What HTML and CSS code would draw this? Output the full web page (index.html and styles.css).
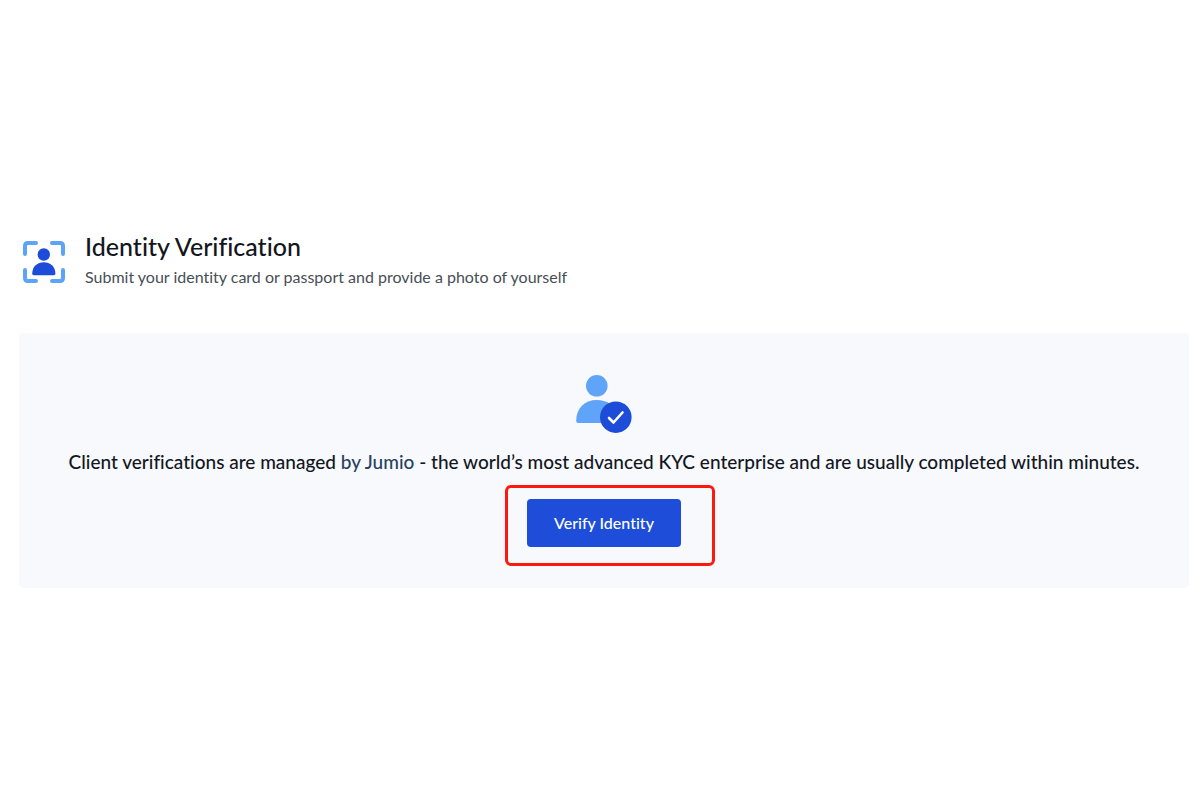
FILE: index.html
```html
<!DOCTYPE html>
<html lang="en">
<head>
<meta charset="utf-8">
<meta name="viewport" content="width=device-width, initial-scale=1">
<title>Identity Verification</title>
<link rel="stylesheet" href="styles.css">
</head>
<body>
<main class="page">
  <header class="intro">
    <svg class="intro-icon" viewBox="0 0 42 42" aria-hidden="true">
      <path class="line" d="M2 13V5Q2 2 5 2H13M29 2H37Q40 2 40 5V13M40 29V37Q40 40 37 40H29M13 40H5Q2 40 2 37V29"/>
      <circle class="dark" cx="20.8" cy="13.5" r="6.2"/>
      <path class="dark" d="M9.2 32.8C9.2 25.200 14.5 21.200 20.8 21.200S32.4 25.200 32.4 32.800Q32.4 34.200 31 34.200H10.6Q9.2 34.200 9.2 32.800Z"/>
    </svg>
    <div class="intro-text">
      <h1 class="title">Identity Verification</h1>
      <p class="subtitle">Submit your identity card or passport and provide a photo of yourself</p>
    </div>
  </header>
  <section class="panel">
    <svg class="panel-icon" viewBox="0 0 56 58" aria-hidden="true">
      <circle class="light" cx="20.8" cy="10.8" r="10.8"/>
      <path class="light" d="M.2 46C.2 33 8.500 25 20.800 25Q28 25 34 28.500V48H2.200Q.2 48 .2 46Z"/>
      <circle class="dark" cx="39.800" cy="42.200" r="15.800"/>
      <path class="tick" d="M33 43L37.500 47.500L46.500 37.500"/>
    </svg>
    <p class="message">Client verifications are managed <span class="partner">by Jumio</span> - the world’s most advanced KYC enterprise and are usually completed within minutes.</p>
    <div class="highlight">
      <button class="verify" type="button">Verify Identity</button>
    </div>
  </section>
</main>
</body>
</html>
```
FILE: styles.css
```css
* {
  box-sizing: border-box;
}

body {
  margin: 0;
  background: #fff;
  color: #13171d;
  font-family: Lato, "Liberation Sans", sans-serif;
  font-variant-ligatures: none;
}

.page {
  padding: 231px 11px 0 19px;
}

.intro {
  display: flex;
  align-items: flex-end;
  gap: 20px;
  padding-left: 4px;
  margin-bottom: 50px;
}

.intro-icon {
  width: 42px;
  height: 42px;
}

.line {
  fill: none;
  stroke: #5da3f8;
  stroke-width: 4;
  stroke-linecap: round;
}

.dark {
  fill: #1c4cd8;
}

.light {
  fill: #60a4f9;
}

.tick {
  fill: none;
  stroke: #fff;
  stroke-width: 2.6;
  stroke-linecap: round;
  stroke-linejoin: round;
}

.title {
  margin: 0;
  font-size: 25px;
  font-weight: 500;
  line-height: 30px;
}

.subtitle {
  margin: 0;
  color: #484e56;
  font-size: 16px;
  line-height: 32px;
}

.intro-text {
  margin-bottom: -10px;
}

.panel {
  display: flex;
  flex-direction: column;
  align-items: center;
  padding: 42px 20px 22px;
  border-radius: 4px;
  background: #f7f9fd;
}

.panel-icon {
  width: 56px;
  height: 58px;
}

.message {
  margin: 17px 0 11px;
  font-size: 19px;
  font-weight: 500;
  line-height: 24px;
  text-align: center;
}

.partner {
  color: #29425f;
}

.highlight {
  padding: 11px 31px 16px 19px;
  margin-left: 12px;
  border: 3px solid #fb1a0b;
  border-radius: 6px;
}

.verify {
  display: block;
  padding: 12px 27px;
  border: 0;
  border-radius: 4px;
  background: #1d4dd9;
  color: #fff;
  font-family: inherit;
  font-size: 16px;
  font-weight: 500;
  line-height: 24px;
  font-variant-ligatures: none;
}
```
